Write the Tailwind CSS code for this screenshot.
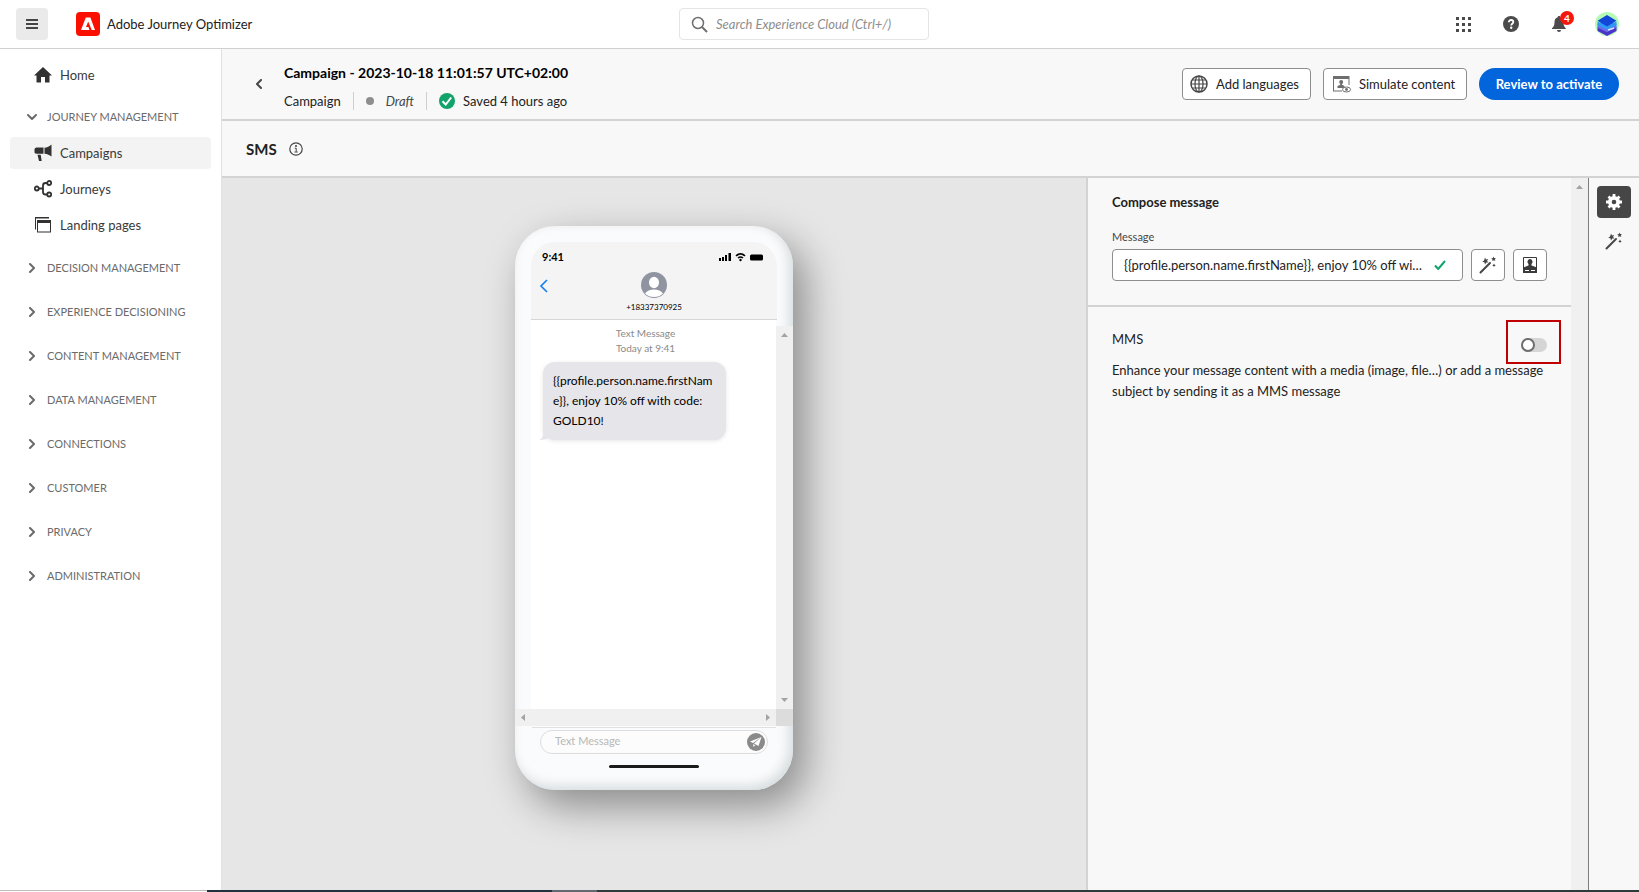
<!DOCTYPE html>
<html lang="en">
<head>
    <meta charset="UTF-8">
    <meta name="viewport" content="width=device-width, initial-scale=1.0">
    <title>Adobe Journey Optimizer</title>
    <script src="https://cdn.jsdelivr.net/npm/@tailwindcss/browser@4"></script>
    <style>
        body {
            font-family: Lato, 'Open Sans', sans-serif;
        }
    </style>
</head>
<body class="h-screen flex flex-col overflow-hidden bg-white text-[13px] leading-5 text-[#222222]">

    <!-- Icons used more than once -->
    <svg class="hidden">
        <symbol id="chevron" viewBox="0 0 10 10"><path d="M3 1l4 4-4 4" fill="none" stroke="currentColor" stroke-width="2" stroke-linecap="round" stroke-linejoin="round"/></symbol>
        <symbol id="wand" viewBox="0 0 18 18">
            <path d="M1.5 16.5L11 7" stroke="currentColor" stroke-width="2" stroke-linecap="round"/>
            <path d="M6 1.5l1 2 2.200-.5-1.200 1.900 1.500 1.600-2.200-.1L6 8.500l-.6-2.200-2.200-.5 1.900-1.200zM14.500.5l.7 1.600 1.700-.1-1.100 1.300.6 1.600-1.600-.6-1.500 1 .2-1.800-1.300-1.100 1.700-.3zM15 7.500l.6 1.200 1.200.6-1.200.6-.6 1.200-.6-1.200-1.200-.6 1.200-.6z" fill="currentColor"/>
        </symbol>
    </svg>

    <!-- Top bar -->
    <header class="h-[49px] shrink-0 flex items-center justify-between border-b border-[#d0d0d0] pl-4 pr-2">
        <div class="flex-1 flex items-center">
            <button aria-label="Menu" class="size-8 rounded bg-[#eaeaea] flex items-center justify-center">
                <svg class="size-3" viewBox="0 0 12 12" fill="#464646"><path d="M0 1h12v2H0zM0 5h12v2H0zM0 9h12v2H0z"/></svg>
            </button>
            <svg class="size-6 ml-7" viewBox="0 0 24 24"><rect width="24" height="24" rx="4" fill="#fa0f00"/><path d="M9.800 5.500h4.600L19 18h-3.300l-3.500-8.600-2.200 5.600h2.400l1.100 3H5z" fill="#fff"/></svg>
            <span class="ml-[7px]">Adobe Journey Optimizer</span>
        </div>
        <label class="w-[250px] h-8 mr-[39px] flex items-center gap-2 border border-[#e4e4e4] rounded px-[11px]">
            <svg class="size-[17px] shrink-0" viewBox="0 0 17 17" fill="none" stroke="#6e6e6e"><circle cx="7" cy="7" r="5.500" stroke-width="1.500"/><path d="M11 11l5 5" stroke-width="2"/></svg>
            <input type="text" aria-label="Search" placeholder="Search Experience Cloud (Ctrl+/)" class="min-w-0 flex-1 italic outline-none placeholder:text-[#8e8e8e]">
        </label>
        <div class="flex-1 flex items-center justify-end">
            <button aria-label="Apps" class="w-12 h-8 flex items-center justify-center">
                <svg class="size-[15px]" viewBox="0 0 15 15" fill="#4b4b4b"><path d="M0 0h3v3H0zM6 0h3v3H6zM12 0h3v3h-3zM0 6h3v3H0zM6 6h3v3H6zM12 6h3v3h-3zM0 12h3v3H0zM6 12h3v3H6zM12 12h3v3h-3z"/></svg>
            </button>
            <button aria-label="Help" class="w-12 h-8 flex items-center justify-center">
                <svg class="size-4" viewBox="0 0 16 16"><circle cx="8" cy="8" r="8" fill="#4b4b4b"/><path d="M5.800 6.200c0-1.400 1-2.200 2.300-2.200s2.200.8 2.200 2c0 1.700-2.100 1.800-2.100 3.400" fill="none" stroke="#fff" stroke-width="1.800"/><circle cx="8.200" cy="11.800" r="1.200" fill="#fff"/></svg>
            </button>
            <button aria-label="Notifications" class="relative w-12 h-8 flex items-center justify-center">
                <svg class="size-4" viewBox="0 0 16 16" fill="#4b4b4b"><path d="M8 0c.8 0 1.300.5 1.300 1.300C11.500 2 12.500 3.800 12.500 6c0 3.800.9 4.800 2.300 6.200V13H1v-.8C2.500 10.800 3.500 9.800 3.500 6c0-2.200 1-4 3.200-4.700C6.700.5 7.200 0 8 0zM6 14h4a2 2 0 0 1-4 0z"/></svg>
                <span class="absolute left-[25px] top-[3px] size-[14px] rounded-full bg-[#f5160d] text-white text-[10px] leading-[14px] font-bold text-center">4</span>
            </button>
            <button aria-label="Account" class="w-12 h-8 flex items-center justify-center">
                <svg class="size-6" viewBox="0 0 24 24"><circle cx="12" cy="12" r="12" fill="#b5fbb5"/><path d="M2.500 15L12 19.500l9.500-4.500v4L12 24l-9.500-5z" fill="#4b35c8"/><path d="M2.500 12L12 8l9.500 4v3.500L12 20l-9.500-4.500z" fill="#6b6cf0"/><path d="M2.500 9.500L12 14l9.500-4.500V13L12 17.500 2.500 13z" fill="#2b9bf4"/><path d="M12 3l9.500 5.800L12 14.500 2.500 8.800z" fill="#1146d8"/><path d="M13 18l6-2" stroke="#d6e4ff" stroke-width="1.500"/></svg>
            </button>
        </div>
    </header>

    <div class="flex-1 min-h-0 flex">
        <!-- Sidebar -->
        <nav class="w-[222px] shrink-0 border-r border-[#e1e1e1] pt-[10px] px-[10px] text-[#3a3a3a]">
            <a href="#" class="flex items-center h-8 pl-6">
                <svg class="size-[18px]" viewBox="0 0 18 18" fill="#323232"><path d="M9 1l9 8.500h-2.500V16.500H11V11H7v5.500H2.500V9.500H0z"/></svg>
                <span class="ml-2">Home</span>
            </a>
            <button class="flex items-center h-[46px] pl-[17px] text-[11px] text-[#6b6b6b] pt-[6px]">
                <svg class="size-[10px] rotate-90"><use href="#chevron"/></svg>
                <span class="ml-[10px]">JOURNEY MANAGEMENT</span>
            </button>
            <ul class="flex flex-col gap-1">
                <li>
                    <a href="#" class="flex items-center h-8 pl-6 rounded bg-[#f3f3f3]">
                        <svg class="size-[18px]" viewBox="0 0 18 18" fill="#323232"><path d="M17.500.5v12c-2-1.500-4-2.500-7-2.800V3.800C13 3.500 15.500 2.200 17.500.5zM9.500 3.500v6.200H2.500A2.300 2.300 0 0 1 .500 8.500V5A2.300 2.300 0 0 1 2.500 3.500zM3.500 10.700h3.200l1 6.300H5z"/></svg>
                        <span class="ml-2">Campaigns</span>
                    </a>
                </li>
                <li>
                    <a href="#" class="flex items-center h-8 pl-6">
                        <svg class="size-[18px]" viewBox="0 0 18 18" fill="none" stroke="#323232" stroke-width="1.800"><circle cx="2.800" cy="8.500" r="2"/><circle cx="15.200" cy="3" r="2"/><circle cx="15.200" cy="14.500" r="2"/><path d="M5 8.500h4M13 3h-1.500Q9 3 9 5.500v6.500q0 2.500 2.500 2.500H13"/></svg>
                        <span class="ml-2">Journeys</span>
                    </a>
                </li>
                <li>
                    <a href="#" class="flex items-center h-8 pl-6">
                        <svg class="size-[18px]" viewBox="0 0 18 18" fill="#323232"><path d="M1 1h14v1.500H2v11H1z"/><path d="M3 4h14v12.500H3zm1 3v8.500h12V7z" fill-rule="evenodd"/></svg>
                        <span class="ml-2">Landing pages</span>
                    </a>
                </li>
            </ul>
            <div class="mt-[5px] text-[11px] text-[#6b6b6b]">
                <button class="flex items-center h-11 pl-[17px]"><svg class="size-[10px]"><use href="#chevron"/></svg><span class="ml-[10px]">DECISION MANAGEMENT</span></button>
                <button class="flex items-center h-11 pl-[17px]"><svg class="size-[10px]"><use href="#chevron"/></svg><span class="ml-[10px]">EXPERIENCE DECISIONING</span></button>
                <button class="flex items-center h-11 pl-[17px]"><svg class="size-[10px]"><use href="#chevron"/></svg><span class="ml-[10px]">CONTENT MANAGEMENT</span></button>
                <button class="flex items-center h-11 pl-[17px]"><svg class="size-[10px]"><use href="#chevron"/></svg><span class="ml-[10px]">DATA MANAGEMENT</span></button>
                <button class="flex items-center h-11 pl-[17px]"><svg class="size-[10px]"><use href="#chevron"/></svg><span class="ml-[10px]">CONNECTIONS</span></button>
                <button class="flex items-center h-11 pl-[17px]"><svg class="size-[10px]"><use href="#chevron"/></svg><span class="ml-[10px]">CUSTOMER</span></button>
                <button class="flex items-center h-11 pl-[17px]"><svg class="size-[10px]"><use href="#chevron"/></svg><span class="ml-[10px]">PRIVACY</span></button>
                <button class="flex items-center h-11 pl-[17px]"><svg class="size-[10px]"><use href="#chevron"/></svg><span class="ml-[10px]">ADMINISTRATION</span></button>
            </div>
        </nav>

        <main class="flex-1 min-w-0 flex flex-col bg-[#f8f8f8]">
            <!-- Campaign header -->
            <div class="h-[72px] shrink-0 flex items-center border-b-2 border-[#d3d3d3] pl-8 pr-5">
                <button aria-label="Back" class="size-[10px] text-[#464646]"><svg class="size-[10px] rotate-180"><use href="#chevron"/></svg></button>
                <div class="ml-5 mt-[6px] flex-1">
                    <h1 class="text-sm leading-5 font-bold text-black">Campaign - 2023-10-18 11:01:57 UTC+02:00</h1>
                    <div class="mt-2 flex items-center h-5">
                        <span>Campaign</span>
                        <span class="ml-3 w-px h-[18px] bg-[#cfcfcf]"></span>
                        <span class="ml-3 size-2 rounded-full bg-[#8e8e8e]"></span>
                        <span class="ml-3 italic text-[#464646]">Draft</span>
                        <span class="ml-3 w-px h-[18px] bg-[#cfcfcf]"></span>
                        <svg class="size-4 ml-3" viewBox="0 0 16 16"><circle cx="8" cy="8" r="8" fill="#12a36b"/><path d="M3.500 8.300l3.200 3.200 5.500-7" fill="none" stroke="#fff" stroke-width="2"/></svg>
                        <span class="ml-2">Saved 4 hours ago</span>
                    </div>
                </div>
                <div class="flex items-center gap-3">
                    <button class="w-[129px] h-8 flex items-center border border-[#8e8e8e] rounded bg-white pl-[7px] gap-2">
                        <svg class="size-[18px]" viewBox="0 0 18 18" fill="none" stroke="#464646" stroke-width="1.200"><circle cx="9" cy="9" r="8" stroke-width="1.500"/><ellipse cx="9" cy="9" rx="4" ry="8"/><path d="M9 1v16M1 9h16M2.500 5h13M2.500 13h13"/></svg>
                        Add languages
                    </button>
                    <button class="w-[144px] h-8 flex items-center border border-[#8e8e8e] rounded bg-white pl-[9px] gap-2">
                        <svg class="size-[18px]" viewBox="0 0 18 18" fill="#6e6e6e"><path d="M0 1h16.500v9h-1V4H1v11.500h8v1H0z"/><circle cx="8.200" cy="7" r="2"/><path d="M7.300 8h1.800v1.800l2.400 1.200v2H4.500v-2l2.800-1.200z"/><ellipse cx="13.500" cy="14.500" rx="4" ry="2.500" fill="#fff" stroke="#6e6e6e"/><circle cx="13.500" cy="14.500" r="1.400"/></svg>
                        Simulate content
                    </button>
                    <button class="w-[140px] h-8 rounded-full bg-[#0265dc] text-white font-bold">Review to activate</button>
                </div>
            </div>

            <!-- Channel title -->
            <div class="h-[57px] shrink-0 flex items-center border-b-2 border-[#d3d3d3] pl-6">
                <h2 class="text-[15px] font-bold">SMS</h2>
                <svg class="size-[14px] ml-3" viewBox="0 0 14 14"><circle cx="7" cy="7" r="6.200" fill="none" stroke="#464646" stroke-width="1.200"/><circle cx="7" cy="4" r="1" fill="#464646"/><path d="M5.800 6.200h1.400v3.600M5.500 10h3.200" fill="none" stroke="#464646"/></svg>
            </div>

            <div class="flex-1 min-h-0 flex">
                <!-- Phone preview -->
                <section class="flex-1 bg-[#e6e6e6] flex justify-center items-start pt-12">
                    <div class="w-[278px] rounded-[40px] bg-[#fafbfc] pt-4 overflow-hidden shadow-[12px_16px_40px_rgba(0,0,0,0.4),inset_-4px_-4px_12px_#d5dbde]">
                        <div class="mx-4 h-[78px] rounded-t-3xl bg-[#f4f4f4] border-b border-[#d6d6d6] px-2 pt-[6px]">
                            <div class="flex items-center justify-between pl-[3px] pr-[5px]">
                                <span class="text-[11px] leading-[18px] font-bold text-black">9:41</span>
                                <svg class="w-[45px] h-[10px]" viewBox="0 0 45 10"><path d="M0 6h2v3H0zM3 5h2v4H3zM6 3h2v6H6zM9.500 1h2.500v8H9.500z"/><path d="M17 3.800q4.500-4 9 0M19 6q2.500-2 5 0" fill="none" stroke="#000" stroke-width="1.600"/><circle cx="21.500" cy="8" r="1.200"/><rect x="31" y="2.500" width="13" height="6" rx="1.500"/></svg>
                            </div>
                            <div class="flex items-start justify-between mt-[6px]">
                                <svg class="w-[10px] h-4 mt-[6px]" viewBox="0 0 10 16"><path d="M8 2L2 8l6 6" fill="none" stroke="#1a80ee" stroke-width="1.700"/></svg>
                                <div class="flex flex-col items-center">
                                    <svg class="size-[26px]" viewBox="0 0 26 26"><circle cx="13" cy="13" r="13" fill="#9094a0"/><ellipse cx="13" cy="10.500" rx="5" ry="5.800" fill="#fff"/><path d="M4 21.500q3-4 9-4t9 4q-3.500 3.500-9 3.500t-9-3.500z" fill="#fff"/></svg>
                                    <span class="mt-1 text-[8px] leading-[10px] text-black">+18337370925</span>
                                </div>
                                <span class="w-[10px]"></span>
                            </div>
                        </div>
                        <div class="flex h-[389px]">
                            <div class="ml-4 flex-1 bg-white pr-4 pt-[6px]">
                                <p class="text-[10px] leading-[15px] text-center text-[#8a8a8a]">Text Message<br>Today at 9:41</p>
                                <div class="relative ml-3 mt-[6px] w-[183px] rounded-xl bg-[#e5e5ea] px-[10px] py-[9px] text-xs leading-5 text-black shadow-[0_1px_4px_rgba(0,0,0,0.1)]">
                                    {{profile.person.name.firstNam<br>e}}, enjoy 10% off with code:<br>GOLD10!
                                    <svg class="absolute left-[-4px] bottom-0 w-3 h-3" viewBox="0 0 12 12"><path d="M4 0v6q0 4-4 6 6 0 10-2z" fill="#e5e5ea"/></svg>
                                </div>
                            </div>
                            <div class="w-[17px] mt-[6px] bg-[#f0f0f0] flex flex-col justify-between items-center py-[7px]">
                                <svg class="w-[7px] h-1" viewBox="0 0 7 4"><path d="M0 4l3.500-4L7 4z" fill="#a3a3a3"/></svg>
                                <svg class="w-[7px] h-1" viewBox="0 0 7 4"><path d="M0 0l3.500 4L7 0z" fill="#a3a3a3"/></svg>
                            </div>
                        </div>
                        <div class="flex h-[17px]">
                            <div class="flex-1 bg-[#f0f0f0] flex justify-between items-center px-[6px]">
                                <svg class="w-1 h-[7px]" viewBox="0 0 4 7"><path d="M4 0L0 3.500 4 7z" fill="#a3a3a3"/></svg>
                                <svg class="w-1 h-[7px]" viewBox="0 0 4 7"><path d="M0 0l4 3.500L0 7z" fill="#a3a3a3"/></svg>
                            </div>
                            <div class="w-[17px] bg-[#dcdcdc]"></div>
                        </div>
                        <div class="mx-[17px] mt-px border-t border-[#e0e0e0] px-2 pt-[2px]">
                            <div class="h-6 flex items-center border border-[#dcdcdc] rounded-full bg-[#fcfcfc] pl-[14px] pr-[2px]">
                                <input type="text" aria-label="Text Message" placeholder="Text Message" class="min-w-0 flex-1 h-5 pb-[2px] text-[11px] outline-none placeholder:text-[#b8b8b8]">
                                <button aria-label="Send" class="size-[18px] shrink-0">
                                    <svg class="size-[18px]" viewBox="0 0 18 18"><circle cx="9" cy="9" r="9" fill="#8a8a8a"/><path d="M14.500 4L3 8.500l3 1.600zM14.500 4L7 10.600l4.500 2.400zM6.300 11l2 1.200-2 1.800z" fill="#fff"/></svg>
                                </button>
                            </div>
                        </div>
                        <div class="w-[90px] h-[3px] rounded-full bg-[#1b1b1b] mx-auto mt-[11px] mb-[22px]"></div>
                    </div>
                </section>

                <!-- Compose panel -->
                <aside class="w-[485px] shrink-0 border-l-2 border-[#d3d3d3]">
                    <div class="px-6 pt-[14px] pb-6 border-b-2 border-[#d3d3d3]">
                        <h3 class="font-bold">Compose message</h3>
                        <label for="message" class="block mt-4 text-[11px] leading-[18px] text-[#464646]">Message</label>
                        <div class="mt-[3px] flex items-center gap-2">
                            <div class="flex-1 h-8 flex items-center border border-[#8e8e8e] rounded bg-white pl-[11px] pr-4">
                                <input id="message" type="text" value="{{profile.person.name.firstName}}, enjoy 10% off with code: GOLD10!" class="min-w-0 flex-1 outline-none text-ellipsis">
                                <svg class="w-3 h-[10px] ml-2 shrink-0" viewBox="0 0 12 10"><path d="M1 5.500L4.200 9 11 1" fill="none" stroke="#12a36b" stroke-width="2"/></svg>
                            </div>
                            <button aria-label="AI assistant" class="w-[34px] h-8 flex items-center justify-center border border-[#8e8e8e] rounded bg-white text-[#464646]"><svg class="size-[18px]"><use href="#wand"/></svg></button>
                            <button aria-label="Personalization" class="w-[34px] h-8 flex items-center justify-center border border-[#8e8e8e] rounded bg-white">
                                <svg class="w-[14px] h-4" viewBox="0 0 14 16"><path d="M.5.5h13v15H.5z" fill="#fff" stroke="#3a3a3a"/><path d="M7 2a2.600 2.800 0 0 1 1.500 5v1.500L14 10.500V16H0v-5.500L5.500 8.500V7A2.600 2.800 0 0 1 7 2z" fill="#3a3a3a"/><path d="M2 13.500h4M8 13.500h4" stroke="#fff"/></svg>
                            </button>
                        </div>
                    </div>
                    <div class="relative px-6 pt-[22px]">
                        <label for="mms" class="block">MMS</label>
                        <input id="mms" type="checkbox" role="switch" class="absolute right-6 top-[31px] appearance-none w-[26px] h-[14px] rounded-full bg-[#d5d5d5] before:block before:size-[14px] before:rounded-full before:border-2 before:border-[#6e6e6e] before:bg-white">
                        <div class="absolute right-[10px] top-[13px] w-[55px] h-11 border-2 border-[#c00000] pointer-events-none"></div>
                        <p class="mt-[11px] leading-[21px]">Enhance your message content with a media (image, file…) or add a message subject by sending it as a MMS message</p>
                    </div>
                </aside>
                <div class="w-[17px] shrink-0 bg-[#f0f0f0] pt-[7px]">
                    <svg class="w-[7px] h-1 mx-auto" viewBox="0 0 7 4"><path d="M0 4l3.500-4L7 4z" fill="#a3a3a3"/></svg>
                </div>
                <div class="w-[51px] shrink-0 border-l border-[#7d7d7d] flex flex-col items-center pt-2">
                    <button aria-label="Settings" class="w-[34px] h-8 rounded bg-[#464646] flex items-center justify-center">
                        <svg class="size-4" viewBox="0 0 16 16"><path d="M8 0v16M0 8h16M2.500 2.500l11 11M13.500 2.500l-11 11" stroke="#fff" stroke-width="2.800"/><circle cx="8" cy="8" r="4.200" fill="none" stroke="#fff" stroke-width="3.600"/><circle cx="8" cy="8" r="2.300" fill="#464646"/></svg>
                    </button>
                    <button aria-label="AI assistant" class="mt-[7px] w-[34px] h-8 flex items-center justify-center text-[#464646]"><svg class="size-[18px]"><use href="#wand"/></svg></button>
                </div>
            </div>
        </main>
    </div>

    <div class="h-[2px] shrink-0 flex">
        <div class="w-[207px] border-t border-[#bdbdbd]"></div>
        <div class="w-[345px] bg-[#1f323d]"></div>
        <div class="w-[45px] bg-[#636970]"></div>
        <div class="flex-1 bg-[#2f3a3a]"></div>
    </div>

</body>
</html>
